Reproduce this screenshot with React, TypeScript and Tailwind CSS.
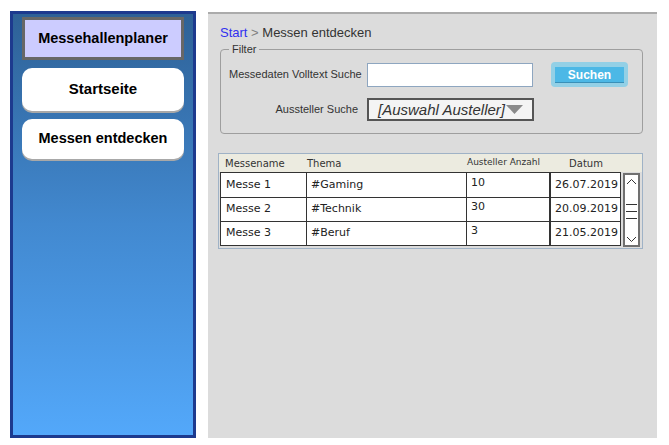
import React from "react";

const rows = [
  { name: "Messe 1", thema: "#Gaming", anzahl: "10", datum: "26.07.2019" },
  { name: "Messe 2", thema: "#Technik", anzahl: "30", datum: "20.09.2019" },
  { name: "Messe 3", thema: "#Beruf", anzahl: "3", datum: "21.05.2019" },
];

function Scrollbar() {
  return (
    <div className="relative h-[74px] w-[17px] border-2 border-[#707070] bg-white">
      <svg className="absolute left-[1px] top-[3px]" width="11" height="7" viewBox="0 0 11 7">
        <path d="M1 6 L5.5 1.5 L10 6" fill="none" stroke="#333" strokeWidth="1" />
      </svg>
      <div className="absolute left-[1px] top-[29px] flex w-[11px] flex-col gap-[6px]">
        <div className="h-px bg-[#333]" />
        <div className="h-px bg-[#333]" />
        <div className="h-px bg-[#333]" />
      </div>
      <svg className="absolute bottom-[2px] left-[1px]" width="11" height="7" viewBox="0 0 11 7">
        <path d="M1 1 L5.5 5.5 L10 1" fill="none" stroke="#333" strokeWidth="1" />
      </svg>
    </div>
  );
}

export default function App() {
  return (
    <div className="flex h-[445px] w-[669px] gap-[12px] bg-white pl-[10px] pt-[11px] font-['Liberation_Sans',Arial,sans-serif]">
      <aside className="flex h-[427px] w-[186px] flex-col gap-[8px] border-[3px] border-[#1d3a8e] bg-gradient-to-b from-[#2e6196] via-[#4289d0] to-[#53a8fa] px-[9px] pt-[3px]">
        <div className="flex h-[43px] items-center justify-center border-[3px] border-[#676767] bg-[#ccccff] text-[14.5px] font-bold text-black">
          Messehallenplaner
        </div>
        <div className="flex h-[43px] items-center justify-center rounded-[10px] bg-white text-[15px] font-bold text-black shadow-[0_2px_0_#a8a8a8]">
          Startseite
        </div>
        <div className="flex h-[40px] items-center justify-center rounded-[10px] bg-white text-[14.5px] font-bold text-black shadow-[0_2px_0_#a8a8a8]">
          Messen entdecken
        </div>
      </aside>

      <main className="mt-[1px] h-[426px] w-[449px] border-t-2 border-[#ababab] bg-[#dcdcdc] pl-[12px] pt-[11px]">
        <div className="text-[13px] leading-[16px] text-[#333]">
          <span className="text-[#3030f0]">Start</span>
          <span className="text-[#808080]"> &gt; </span>
          Messen entdecken
        </div>

        <fieldset className="mt-[2px] h-[91px] w-[423px] rounded-[4px] border border-[#9e9e9e] pl-[8px]">
          <legend className="ml-0 px-[3px] text-[11px] leading-[12px] text-[#333]">Filter</legend>
          <div className="mt-[7px] flex items-center">
            <span className="w-[138px] text-[11px] text-[#333]">Messedaten Volltext Suche</span>
            <div className="h-[24px] w-[166px] border border-[#8ea6c0] bg-white" />
            <div className="ml-[18px] flex h-[25px] w-[77px] items-center justify-center rounded-[4px] bg-[#93d0e6]">
              <div className="flex h-[15px] w-[69px] items-center justify-center bg-[#4cb8e6] text-[12px] font-bold leading-none text-white shadow-[0_1px_0_#3a90b8]">
                Suchen
              </div>
            </div>
          </div>
          <div className="mt-[11px] flex items-center">
            <span className="w-[129px] text-right text-[11px] text-[#333]">Aussteller Suche</span>
            <div className="ml-[9px] flex h-[23px] w-[167px] items-center border-2 border-[#555] bg-[#f4f4f4] pl-[9px]">
              <span className="text-[15px] italic leading-none text-[#333]">[Auswahl Austeller]</span>
              <svg className="ml-[1px]" width="17" height="9" viewBox="0 0 17 9">
                <path d="M0 0 H17 L8.5 9 Z" fill="#8a8a8a" />
              </svg>
            </div>
          </div>
        </fieldset>

        <div className="-ml-[2px] mt-[19px] w-[425px] border border-[#9fb2c6] bg-[#dcdcdc] font-['DejaVu_Sans',sans-serif] text-[#222]">
          <div className="flex h-[18px] items-center bg-[#ecebe0] text-[10px] text-[#333]">
            <span className="w-[88px] pl-[6px]">Messename</span>
            <span className="w-[160px]">Thema</span>
            <span className="w-[84px] text-[9px]">Austeller Anzahl</span>
            <span className="w-[70px] text-center">Datum</span>
          </div>
          <div className="flex pb-[1px] pl-[1px]">
            <div className="flex flex-col">
              {rows.map((r) => (
                <div key={r.name} className="-mt-px flex h-[25px] first:mt-0 first:h-[26px]">
                  <div className="flex w-[87px] items-center border border-[#333] bg-white pl-[5px] text-[11px]">{r.name}</div>
                  <div className="-ml-px flex w-[161px] items-center border border-[#333] bg-white pl-[4px] text-[11px]">{r.thema}</div>
                  <div className="-ml-px flex w-[84px] items-center border border-[#333] bg-white pb-[4px] pl-[4px] text-[11px]">{r.anzahl}</div>
                  <div className="flex w-[71px] items-center border border-[#333] bg-white pl-[4px] text-[11px]">{r.datum}</div>
                </div>
              ))}
            </div>
            <div className="ml-[2px] mt-px">
              <Scrollbar />
            </div>
          </div>
        </div>
      </main>
    </div>
  );
}
